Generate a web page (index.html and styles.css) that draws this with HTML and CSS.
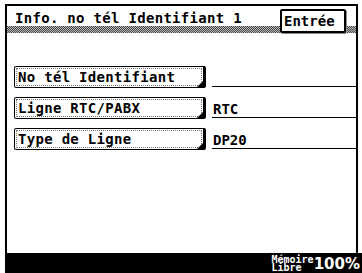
FILE: index.html
```html
<!DOCTYPE html>
<html>
<head>
<meta charset="utf-8">
<link rel="stylesheet" href="styles.css">
</head>
<body>
<div class="screen">
  <div class="header">
    <svg class="band" width="349" height="7" shape-rendering="crispEdges">
      <defs>
        <pattern id="dith" width="2" height="2" patternUnits="userSpaceOnUse">
          <rect width="2" height="2" fill="#b4b4b4"/>
          <rect x="0" y="0" width="1" height="1" fill="#4a4a4a"/>
          <rect x="1" y="1" width="1" height="1" fill="#4a4a4a"/>
        </pattern>
      </defs>
      <rect width="349" height="7" fill="url(#dith)"/>
    </svg>
    <div class="title">Info. no tél Identifiant 1</div>
    <div class="enter">Entrée</div>
  </div>
  <div class="rows">
    <div class="row">
      <div class="btn"><span>No tél Identifiant</span></div>
      <div class="value"></div>
    </div>
    <div class="row">
      <div class="btn"><span>Ligne RTC/PABX</span></div>
      <div class="value">RTC</div>
    </div>
    <div class="row">
      <div class="btn"><span>Type de Ligne</span></div>
      <div class="value">DP20</div>
    </div>
  </div>
  <div class="footer">
    <div class="mem"><span>Mémoire</span><span>Libre</span></div>
    <div class="pct">100%</div>
  </div>
</div>
</body>
</html>
```
FILE: styles.css
```css
html, body {
  margin: 0;
  padding: 0;
  background: #fff;
  width: 362px;
  height: 273px;
  overflow: hidden;
}
.screen {
  margin: 4px 0 0 5px;
  width: 349px;
  height: 269px;
  border-left: 2px solid #000;
  border-top: 2px solid #000;
  border-right: 2px solid #000;
  display: flex;
  flex-direction: column;
  font-family: "DejaVu Sans Mono", monospace;
  color: #000;
}
.header {
  position: relative;
  height: 27px;
  display: flex;
  align-items: flex-start;
  justify-content: space-between;
}
.band {
  position: absolute;
  left: 0;
  top: 20px;
  display: block;
}
.title {
  position: relative;
  font-size: 14px;
  font-weight: bold;
  letter-spacing: 0.3px;
  padding: 4px 0 0 8px;
  line-height: 16px;
}
.enter {
  position: relative;
  z-index: 1;
  margin: 3px 10px 0 0;
  width: 60px;
  height: 20px;
  border: 2px solid #000;
  border-radius: 2px;
  background: #fff;
  font-size: 14px;
  font-weight: bold;
  line-height: 20px;
  padding-left: 2px;
  box-sizing: content-box;
  box-shadow: 1px 1px 0 #888;
}
.rows {
  display: flex;
  flex-direction: column;
  gap: 9px;
  padding: 33px 0 0 7px;
}
.row {
  display: flex;
  align-items: stretch;
  height: 22px;
}
.btn {
  position: relative;
  width: 186px;
  height: 18px;
  border: 1px solid #000;
  border-right-width: 3px;
  border-radius: 2px;
  padding: 1px;
}
.btn span {
  display: block;
  height: 16px;
  border: 1px dotted #777;
  font-size: 14px;
  font-weight: bold;
  line-height: 16px;
  padding-left: 1px;
  letter-spacing: 0.3px;
}
.btn::after {
  content: "";
  position: absolute;
  right: 0;
  bottom: 0;
  width: 0;
  height: 0;
  border-left: 6px solid transparent;
  border-bottom: 6px solid #000;
}
.value {
  flex: 1;
  margin-left: 6px;
  border-bottom: 1px solid #000;
  font-size: 14px;
  font-weight: bold;
  line-height: 16px;
  height: 21px;
  box-sizing: border-box;
  padding: 4px 0 0 1px;
}
.footer {
  margin-top: auto;
  margin-left: -2px;
  margin-right: -6px;
  height: 22px;
  background: #000;
  color: #fff;
  display: flex;
  justify-content: flex-end;
  align-items: flex-start;
  padding-right: 2px;
  overflow: hidden;
}
.mem {
  display: flex;
  flex-direction: column;
  font-size: 10px;
  line-height: 8px;
  font-weight: bold;
  margin-top: 3px;
}
.pct {
  font-size: 15px;
  line-height: 15px;
  font-weight: bold;
  font-family: "DejaVu Sans", sans-serif;
  margin-top: 4px;
}
```
